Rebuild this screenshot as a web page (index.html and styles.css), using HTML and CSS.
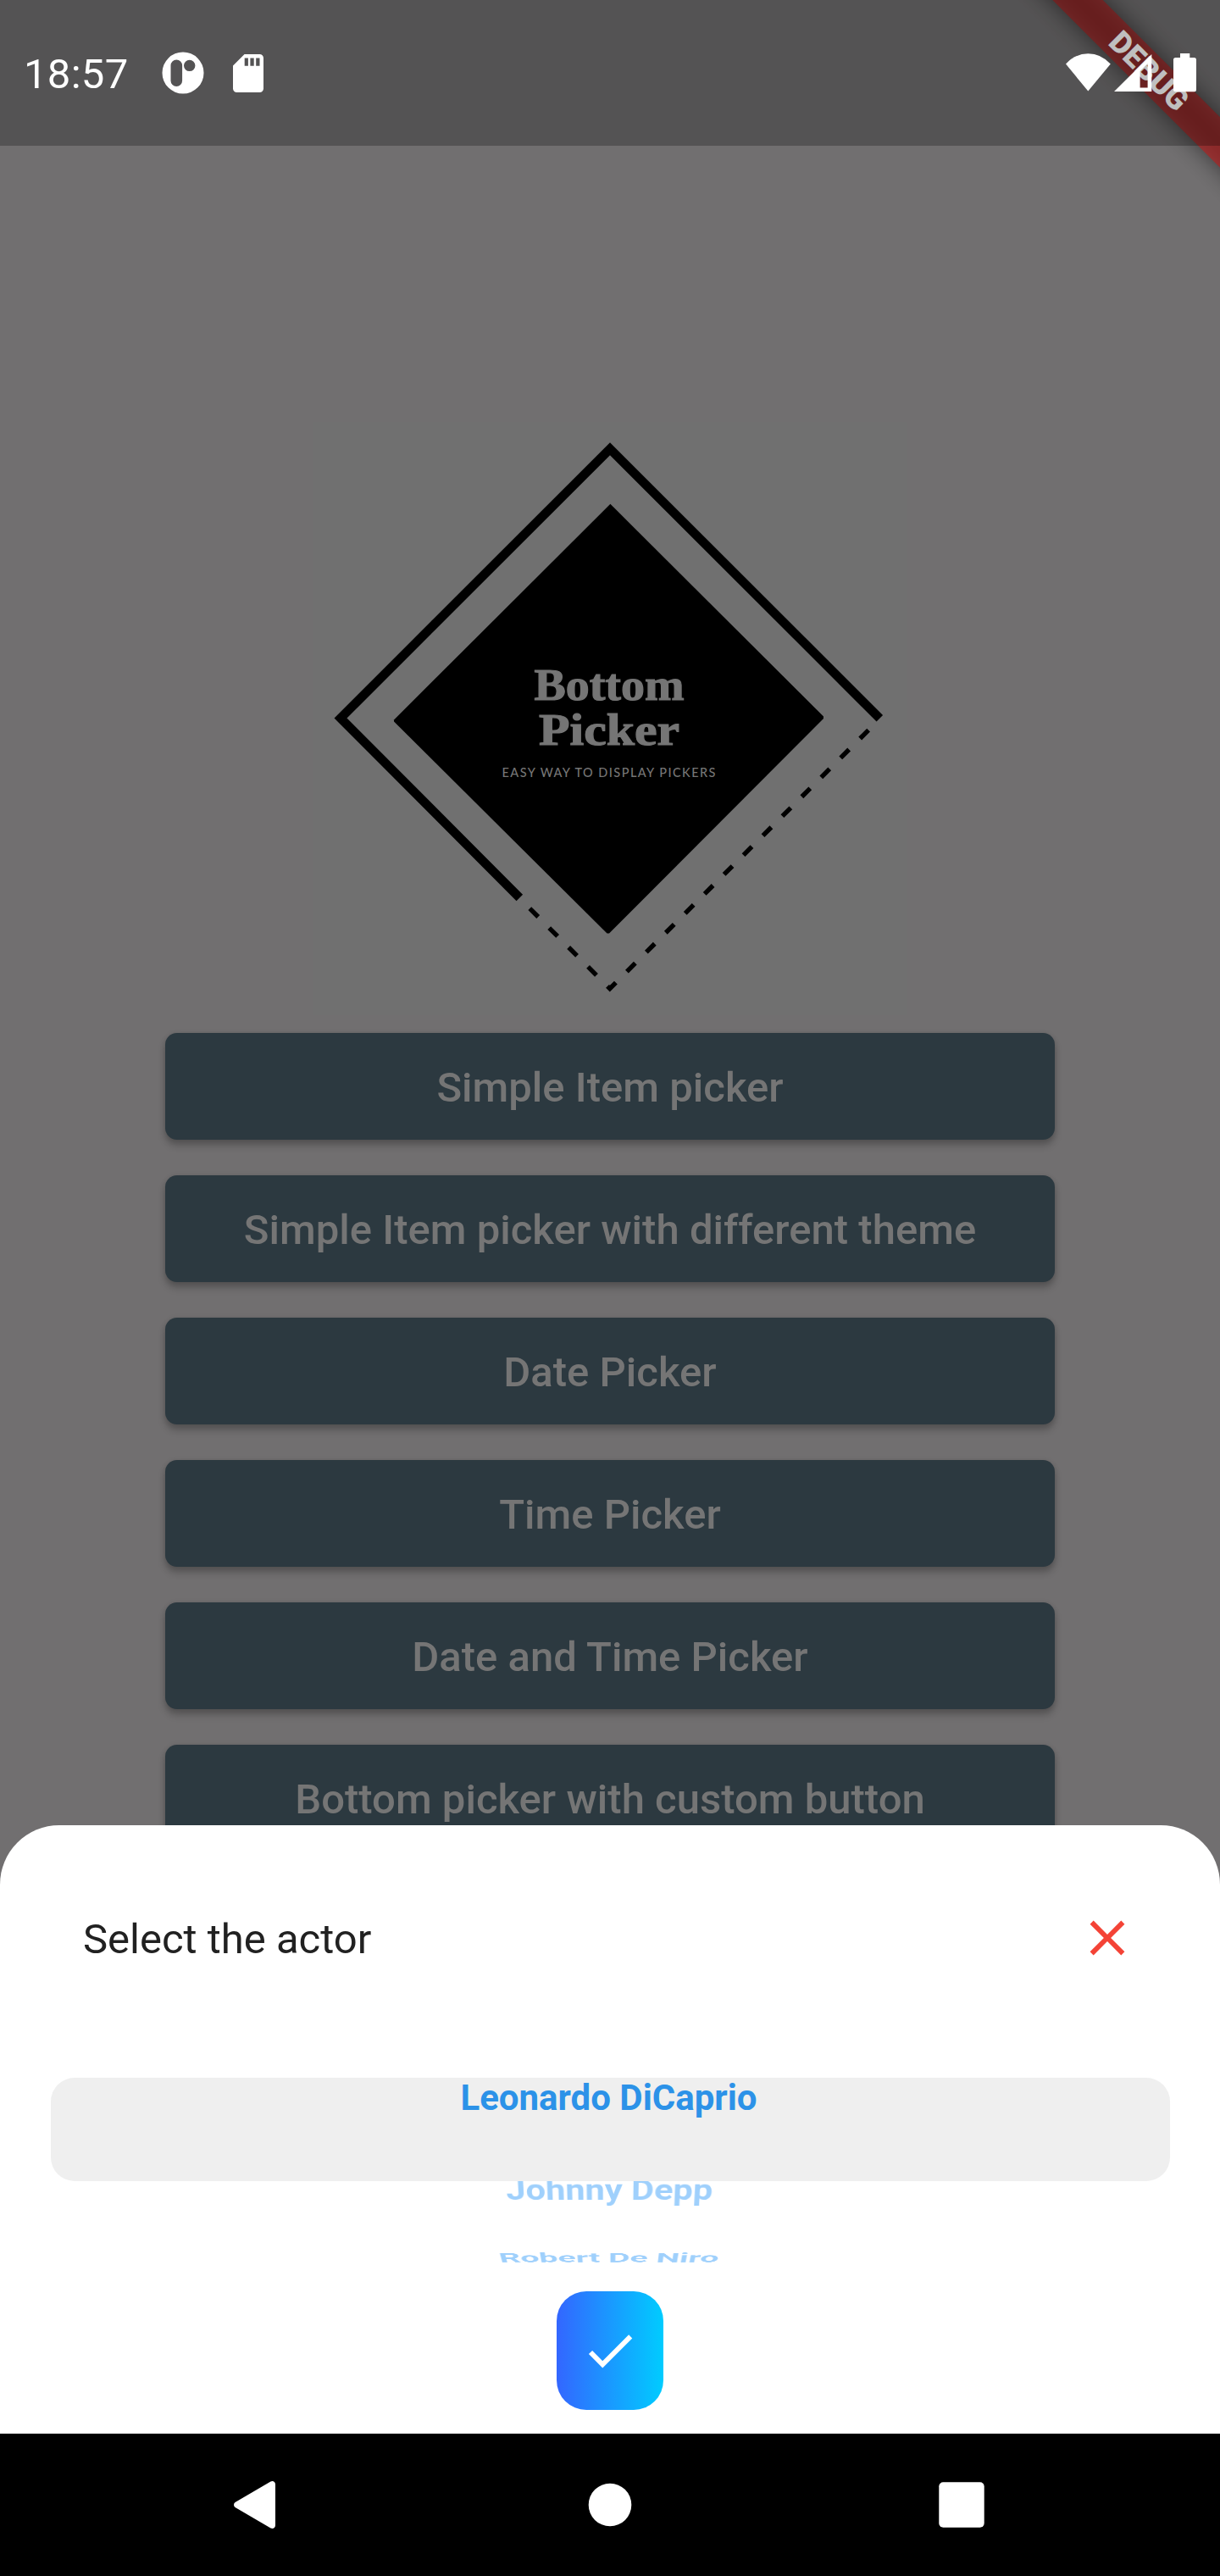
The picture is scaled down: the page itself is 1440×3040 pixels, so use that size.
FILE: index.html
```html
<!DOCTYPE html>
<html lang="en">
<head>
<meta charset="utf-8">
<title>Bottom Picker</title>
<link rel="stylesheet" href="styles.css">
</head>
<body>
<div class="phone">
  <div class="banner-area">
    <div class="banner-shadow"></div>
    <div class="banner">DEBUG</div>
  </div>
  <header class="status">
    <span class="clock">18:57</span>
    <svg class="icon-app" width="50" height="50" viewBox="0 0 50 50" fill="#fff"><path fill-rule="evenodd" d="M25 .5a24.5 24.5 0 1 0 0 49a24.5 24.5 0 1 0 0-49zM17.3 9.5a6.8 6.8 0 0 1 6.8 6.8v17.9a6.8 6.8 0 0 1-13.6 0V16.300a6.800 6.800 0 0 1 6.800-6.800zM32.700 9.700a6.700 6.700 0 1 1 0 13.400a6.700 6.700 0 1 1 0-13.400z"/></svg>
    <svg class="icon-sd" width="36" height="45" viewBox="0 0 36 45" fill="#fff"><path fill-rule="evenodd" d="M13.500 0H31.500a4.500 4.500 0 0 1 4.500 4.500v36a4.500 4.500 0 0 1-4.500 4.500H4.500a4.500 4.500 0 0 1-4.500-4.500V13.500zM13.700 4.500v9.200h4.200v-9.200zM20.400 4.500v9.200h4.300v-9.200zM27.200 4.500v9.200h4.300v-9.200z"/></svg>
    <svg class="icon-wifi" width="53" height="45" viewBox="0 0 53 45" fill="#fff"><path d="M26.300 44.500L0 12.600Q11 .300 26.300 .300T52.800 12.600z"/></svg>
    <svg class="icon-signal" width="45" height="44" viewBox="0 0 45 44" fill="#fff"><path fill-rule="evenodd" d="M44.300 0V44H0zM39.600 11L30.600 20V39.500H39.600z"/></svg>
    <svg class="icon-battery" width="27" height="46" viewBox="0 0 27 46" fill="#fff"><path d="M8 0H19.300V5H24.500a2.500 2.500 0 0 1 2.500 2.500V42.700a2.500 2.500 0 0 1-2.500 2.500H2.500A2.500 2.500 0 0 1 0 42.700V7.500A2.500 2.500 0 0 1 2.500 5H8z"/></svg>
  </header>
  <main class="content">
    <svg class="logo" width="700" height="700" viewBox="370 498 700 700">
      <polyline points="1038.300,847.700 720,529.700 402,847.500 613.300,1059.500" fill="none" stroke="#000" stroke-width="10.600"/>
      <polygon points="720.400,594.700 972,845.500 972,848 719,1101.600 716.500,1101.600 465,851.500 465,849.500"/>
      <polyline points="1025.100,861.600 719.800,1166.700 624.500,1071.300" fill="none" stroke="#000" stroke-width="5.400" stroke-dasharray="14 18.430"/>
      <text class="logo-title" x="630.500" y="825.500" textLength="177" lengthAdjust="spacingAndGlyphs">Bottom</text>
      <text class="logo-title" x="636" y="878.500" textLength="166" lengthAdjust="spacingAndGlyphs">Picker</text>
      <text class="logo-sub" x="592.500" y="916.500" textLength="252">EASY WAY TO DISPLAY PICKERS</text>
    </svg>
    <nav class="buttons">
      <button class="btn">Simple Item picker</button>
      <button class="btn">Simple Item picker with different theme</button>
      <button class="btn">Date Picker</button>
      <button class="btn">Time Picker</button>
      <button class="btn">Date and Time Picker</button>
      <button class="btn">Bottom picker with custom button</button>
    </nav>
  </main>
  <section class="sheet">
    <div class="sheet-head">
      <h1 class="sheet-title">Select the actor</h1>
      <svg width="70" height="70" viewBox="0 0 24 24" fill="#f44336"><path d="M19 6.410L17.590 5 12 10.590 6.410 5 5 6.410 10.590 12 5 17.590 6.410 19 12 13.410 17.590 19 19 17.590 13.410 12z"/></svg>
    </div>
    <div class="wheel">
      <div class="selected"><span>Leonardo DiCaprio</span></div>
      <div class="rest">
        <div class="row second"><span>Johnny Depp</span></div>
        <div class="row third"><span>Robert De Niro</span></div>
      </div>
    </div>
    <button class="confirm">
      <svg width="70" height="70" viewBox="0 0 24 24" fill="#fff"><path d="M9 16.170L4.830 12l-1.420 1.410L9 19 21 7l-1.410-1.410z"/></svg>
    </button>
  </section>
  <footer class="navbar">
    <svg width="56" height="58" viewBox="0 0 56 58" fill="#fff"><path d="M1.600 26L43.500 1.500Q46 .500 47.500 1.700Q49 2.800 49 5V53Q49 55.200 47.500 56.300Q46 57.500 43.500 56.500L1.600 32Q0 31 0 29T1.600 26z"/></svg>
    <svg width="52" height="52" viewBox="0 0 52 52" fill="#fff"><circle cx="26" cy="26" r="25.300"/></svg>
    <svg width="54" height="54" viewBox="0 0 54 54" fill="#fff"><rect x=".3" y=".3" width="53.400" height="53.400" rx="5"/></svg>
  </footer>
</div>
</body>
</html>
```
FILE: styles.css
```css
* { box-sizing: border-box; }
body { margin: 0; font-family: Roboto, "Liberation Sans", sans-serif; }
svg { display: block; flex: none; }
button { border: 0; padding: 0; font-family: inherit; }
.phone { position: relative; width: 1440px; height: 3040px; overflow: hidden; background: #716f70; display: flex; flex-direction: column; }

/* corner ribbon, drawn over the page and under the status bar tint */
.banner-area { position: absolute; top: 0; right: 0; width: 300px; height: 300px; overflow: hidden; z-index: 1; }
.banner-shadow, .banner { position: absolute; left: -84px; top: 63px; width: 600px; height: 42px; transform: rotate(45deg); }
.banner-shadow { background: rgba(0, 0, 0, .5); filter: blur(14px); }
.banner { background: rgba(183, 28, 28, .627); color: #fff; font-size: 36px; line-height: 42px; font-weight: 900; text-align: center; }

.status { position: relative; z-index: 2; flex: none; height: 172px; background: rgba(0, 0, 0, .25); display: flex; align-items: center; padding: 0 28px; color: #fff; }
.clock { width: 162px; font-size: 49px; line-height: 58px; margin-top: 4px; letter-spacing: .3px; }
.icon-app { margin-left: .5px; }
.icon-sd { margin-left: 34px; }
.icon-wifi { margin-left: auto; margin-top: -1px; }
.icon-signal { margin-left: 4.500px; }
.icon-battery { margin-left: 25px; margin-top: 0; }

.content { flex: none; height: 2052px; padding-top: 326px; overflow: hidden; display: flex; flex-direction: column; align-items: center; }
.logo { background: #707070; }
.logo-title { font-family: "Liberation Serif", serif; font-weight: 700; font-size: 53px; fill: #757575; stroke: #757575; stroke-width: 1.200px; }
.logo-sub { font-family: Lato, sans-serif; font-weight: 500; font-size: 14.500px; fill: #757575; }
.buttons { margin-top: 21px; display: flex; flex-direction: column; gap: 42px; }
.btn { flex: none; width: 1050px; height: 126px; padding-top: 2px; border-radius: 14px; background: #2c3940; color: #757575; font-size: 49px; font-weight: 500; letter-spacing: .02px; box-shadow: 0 7px 9px rgba(0, 0, 0, .22), 0 1px 6px rgba(0, 0, 0, .12); }

.sheet { position: relative; z-index: 1; flex: none; height: 718px; margin-top: -70px; border-radius: 70px 70px 0 0; background: #fff; padding-top: 98px; display: flex; flex-direction: column; align-items: center; }
.sheet-head { width: 1440px; height: 70px; padding: 0 98px; display: flex; align-items: center; justify-content: space-between; }
.sheet-title { margin: 4px 0 0; font-size: 49px; line-height: 58px; font-weight: 400; color: #212121; }
.wheel { margin-top: 130px; width: 1321px; height: 252px; font-size: 42px; font-weight: 700; }
.selected { height: 122px; padding-right: 3px; border-radius: 28px; background: #efefef; color: #2c92e8; text-align: center; line-height: 47px; }
.rest { height: 130px; padding-right: 2px; overflow: hidden; color: #9fd0fc; text-align: center; }
.row { display: flex; justify-content: center; height: 49px; line-height: 49px; white-space: nowrap; }
.row span { display: block; }
.second { margin-top: -14px; }
.second span { transform: perspective(1400px) rotateX(-37deg) scaleX(.990); }
.third { margin-top: 31px; }
.third span { transform: perspective(1200px) rotateX(-69deg) scaleX(.935); }
.confirm { width: 126px; height: 140px; border-radius: 35px; background: linear-gradient(90deg, #3366ff, #00ccff); display: flex; align-items: center; justify-content: center; }

.navbar { flex: none; height: 168px; background: #000; display: flex; align-items: center; justify-content: space-between; padding: 0 278px 0 276px; }
```
